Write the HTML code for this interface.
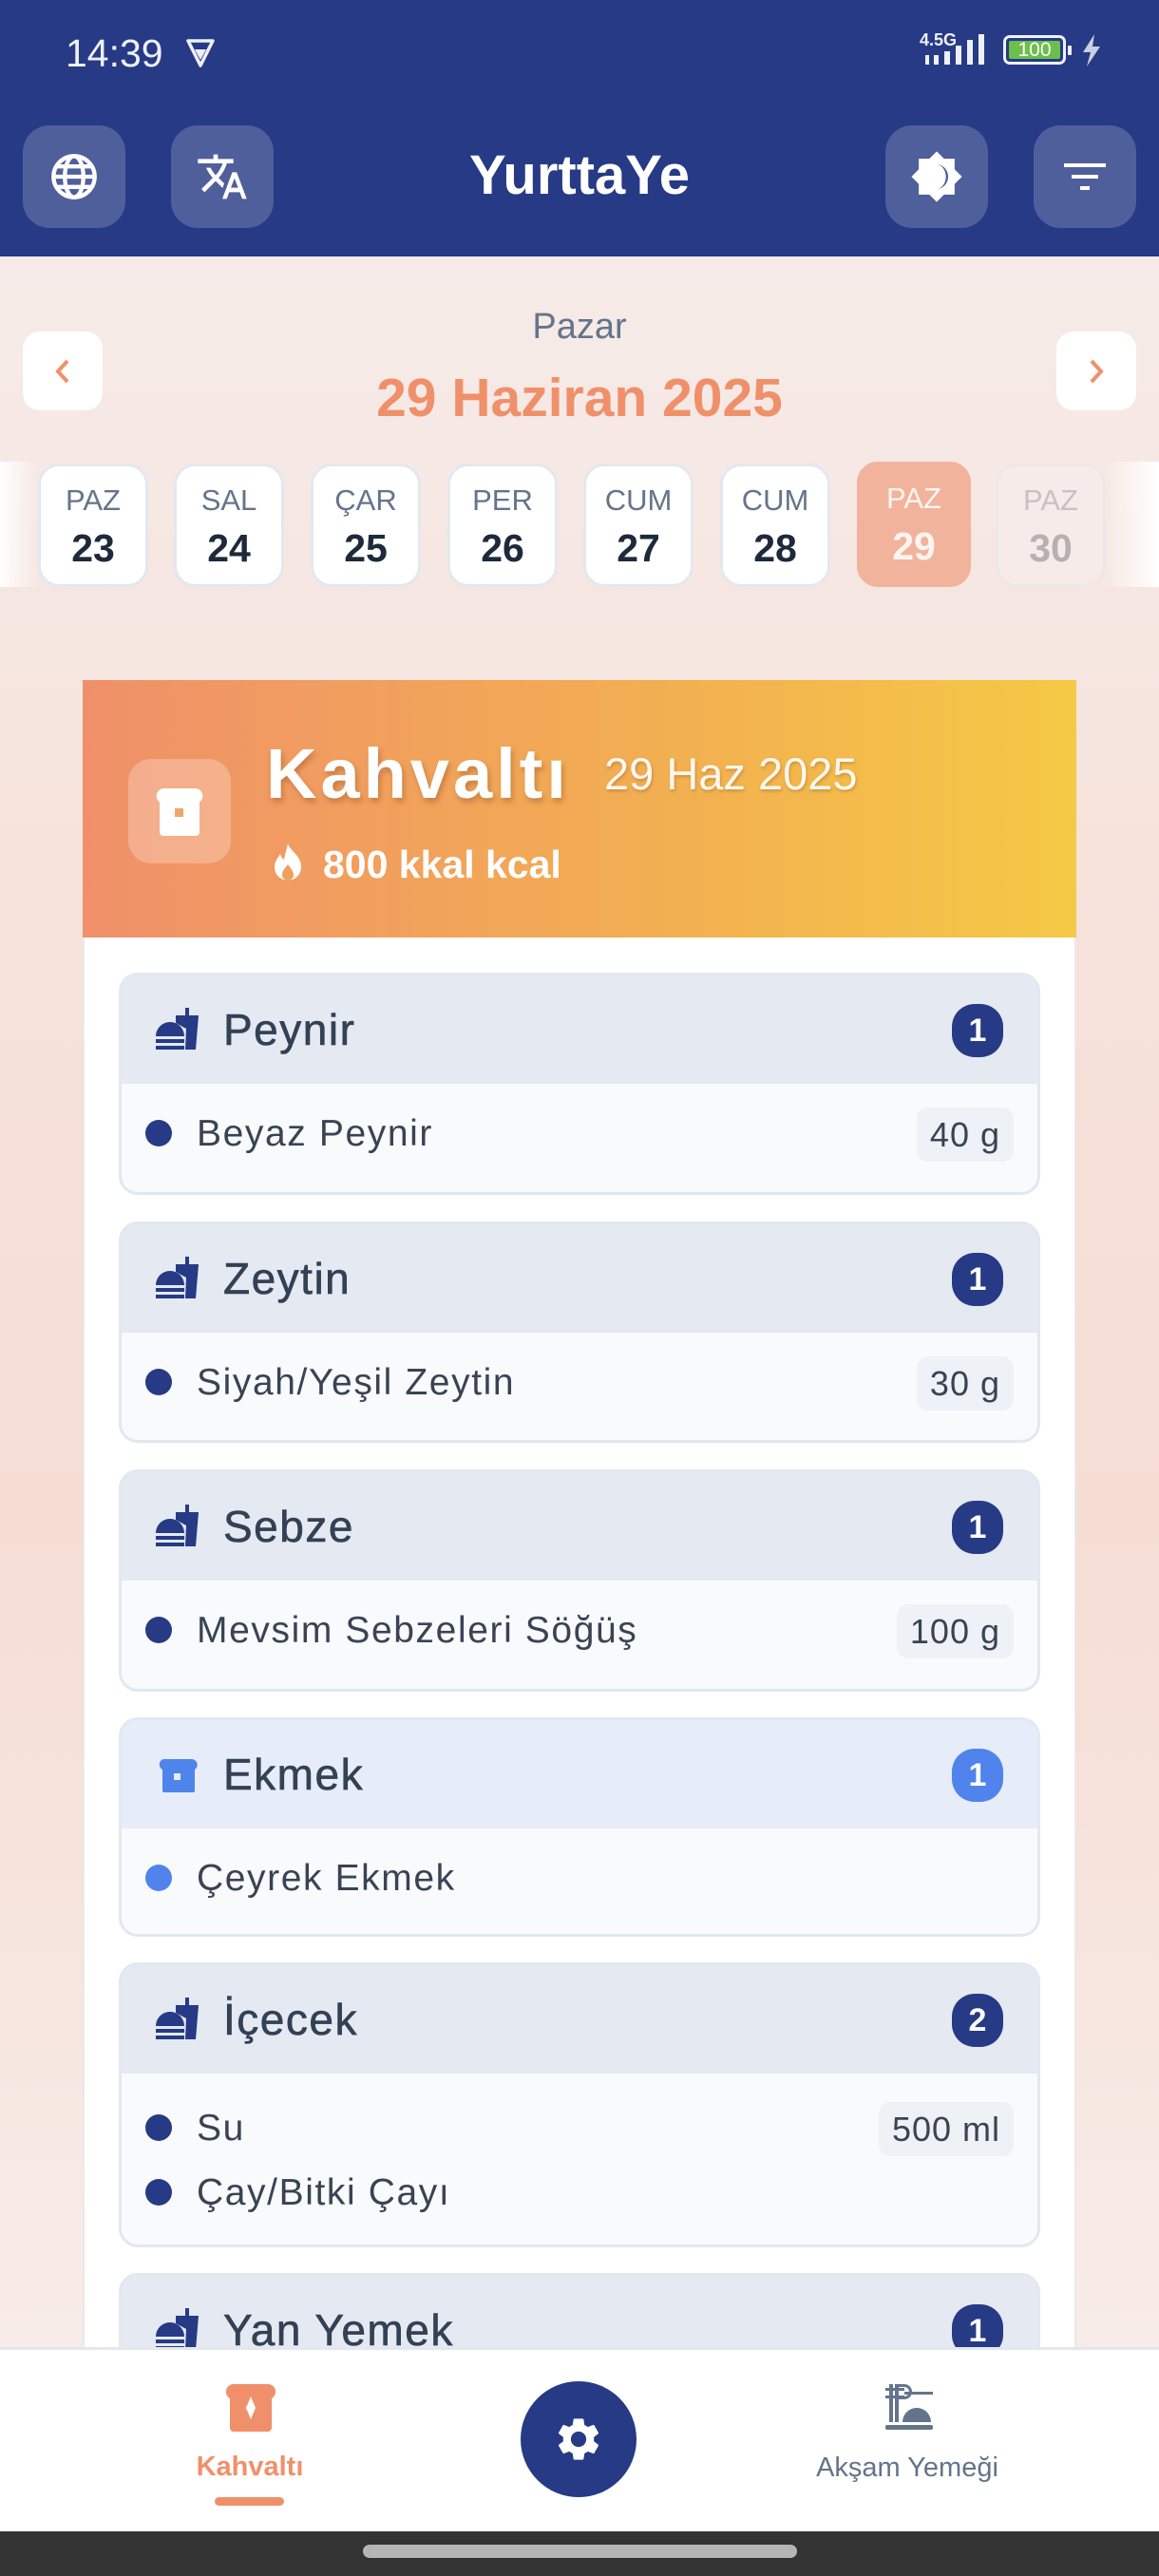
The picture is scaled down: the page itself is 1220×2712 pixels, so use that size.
<!DOCTYPE html>
<html><head><meta charset="utf-8"><style>
*{margin:0;padding:0;box-sizing:border-box}
body{width:1220px;height:2712px;overflow:hidden;position:relative;font-family:"Liberation Sans",sans-serif;background:linear-gradient(180deg,#f6ebe8 270px,#f6e3dc 900px,#f5ddd4 1600px,#f8ece8 2471px)}
.a{position:absolute}
.hb{position:absolute;top:132px;width:108px;height:108px;border-radius:28px;background:#4f5f9c;display:flex;align-items:center;justify-content:center}
.chip{position:absolute;top:488px;width:116px;height:130px;border-radius:22px;background:#fff;border:3px solid #e3e8f0;text-align:center}
.chip .l{position:absolute;top:19px;left:0;right:0;font-size:31px;color:#64748b;line-height:34px}
.chip .n{position:absolute;top:64px;left:0;right:0;font-size:41px;font-weight:bold;color:#1e293b;line-height:44px}
.cat{position:absolute;left:125px;width:970px;border:3px solid #e2e8f0;border-radius:20px;background:#f8fafc;overflow:hidden}
.ch{height:114px;background:#e4e9f2;position:relative}
.ch .t{position:absolute;left:107px;top:32px;font-size:46px;color:#334155;line-height:50px;letter-spacing:1.5px;-webkit-text-stroke:0.6px #334155}
.ch svg{position:absolute;left:36px;top:34px}
.bd{position:absolute;right:36px;top:30px;width:54px;height:56px;border-radius:24px;background:#263a85;color:#fff;font-size:34px;font-weight:bold;text-align:center;line-height:56px}
.it{position:relative;height:68px}
.it .d{position:absolute;left:25px;top:22px;width:28px;height:28px;border-radius:50%;background:#263a85}
.it .x{position:absolute;left:79px;top:16px;font-size:39px;color:#3a4354;line-height:42px;letter-spacing:1.6px}
.it .p{position:absolute;right:25px;top:9px;height:57px;padding:0 14px;border-radius:12px;background:#eef1f6;font-size:36px;color:#3a4354;line-height:57px;letter-spacing:1px}
</style></head><body>
<div class="a" style="left:0;top:0;width:1220px;height:270px;background:#263a85"></div>
<div class="a" style="left:69px;top:34px;font-size:41px;color:#eef0f8;line-height:44px">14:39</div>
<svg class="a" style="left:194px;top:40px" width="34" height="32" viewBox="0 0 34 32"><path d="M4 3h26l-13 26z" fill="none" stroke="#eef0f8" stroke-width="3.5" stroke-linejoin="round"/><path d="M11 12h12l-6 11z" fill="#eef0f8"/></svg>
<div class="a" style="left:968px;top:32px;font-size:18px;font-weight:bold;color:#eef0f8">4.5G</div>
<svg class="a" style="left:970px;top:36px" width="72" height="34" viewBox="0 0 72 34"><rect x="4" y="22" width="4" height="10" fill="#eef0f8"/><rect x="13" y="22" width="5" height="10" fill="#eef0f8"/><rect x="24" y="18" width="6" height="14" fill="#eef0f8"/><rect x="36" y="12" width="6" height="20" fill="#eef0f8"/><rect x="48" y="6" width="6" height="26" fill="#eef0f8"/><rect x="60" y="0" width="6" height="32" fill="#eef0f8"/></svg>
<div class="a" style="left:1056px;top:37px;width:66px;height:31px;border:3px solid #eef0f8;border-radius:7px;padding:3px"><div style="width:100%;height:100%;background:#6bbf4a;border-radius:2px;color:#fff;font-size:21px;line-height:19px;text-align:center">100</div></div>
<div class="a" style="left:1124px;top:48px;width:4px;height:10px;background:#eef0f8;border-radius:1px"></div>
<svg class="a" style="left:1138px;top:36px" width="22" height="34" viewBox="0 0 22 34"><path d="M14 0L2 19h8L6 34l14-21h-8z" fill="#c9cfe3"/></svg>

<div class="hb" style="left:24px"><svg width="52" height="52" viewBox="0 0 24 24" fill="none" stroke="#fff" stroke-width="2"><circle cx="12" cy="12" r="10"/><ellipse cx="12" cy="12" rx="4.5" ry="10"/><path d="M2 12h20M3.5 7h17M3.5 17h17"/></svg></div>
<div class="hb" style="left:180px"><svg width="56" height="56" viewBox="0 0 24 24" fill="#fff"><path d="M12.87 15.07l-2.54-2.51.03-.03A17.5 17.5 0 0014.07 6H17V4h-7V2H8v2H1v2h11.17C11.5 7.92 10.44 9.750 9 11.35 8.07 10.32 7.3 9.19 6.69 8h-2c.73 1.63 1.73 3.17 2.98 4.560l-5.09 5.02L4 19l5-5 3.11 3.11.76-2.04zM18.5 10h-2L12 22h2l1.12-3h4.75L21 22h2l-4.5-12zm-2.62 7l1.62-4.33L19.12 17h-3.24z"/></svg></div>
<div class="a" style="left:0;width:1220px;top:150px;text-align:center;font-size:58px;font-weight:bold;color:#fff;line-height:70px">YurttaYe</div>
<div class="hb" style="left:932px"><svg width="58" height="58" viewBox="0 0 24 24"><path d="M12 1l3.2 3.2H19.8v4.6L23 12l-3.2 3.2v4.6h-4.6L12 23l-3.2-3.2H4.2v-4.6L1 12l3.2-3.2V4.2h4.6z" fill="#fff"/><path d="M11.5 6.5a5.5 5.5 0 010 11a4.5 5.5 0 000-11z" fill="#4f5f9c"/></svg></div>
<div class="hb" style="left:1088px"><svg width="48" height="48" viewBox="0 0 48 48" fill="#fff"><rect x="2" y="10" width="44" height="4"/><rect x="10" y="22" width="28" height="4"/><rect x="19" y="34" width="10" height="4"/></svg></div>

<div class="a" style="left:24px;top:349px;width:84px;height:83px;background:#fff;border-radius:18px;display:flex;align-items:center;justify-content:center"><svg width="20" height="28" viewBox="0 0 20 28"><path d="M15 3L5 14l10 11" fill="none" stroke="#f0906a" stroke-width="4"/></svg></div>
<div class="a" style="left:1112px;top:349px;width:84px;height:83px;background:#fff;border-radius:18px;display:flex;align-items:center;justify-content:center"><svg width="20" height="28" viewBox="0 0 20 28"><path d="M5 3l10 11L5 25" fill="none" stroke="#f0906a" stroke-width="4"/></svg></div>
<div class="a" style="left:0;width:1220px;top:322px;text-align:center;font-size:38px;color:#64748b;line-height:44px">Pazar</div>
<div class="a" style="left:0;width:1220px;top:386px;text-align:center;font-size:57px;font-weight:bold;color:#f0906a;line-height:66px">29 Haziran 2025</div>

<div class="a" style="left:0;top:486px;width:40px;height:132px;background:linear-gradient(90deg,#fff,rgba(255,255,255,0))"></div>
<div class="a" style="left:1160px;top:486px;width:60px;height:132px;background:linear-gradient(270deg,#fff,rgba(255,255,255,0))"></div>
<div class="chip" style="left:40px"><div class="l">PAZ</div><div class="n">23</div></div>
<div class="chip" style="left:183px"><div class="l">SAL</div><div class="n">24</div></div>
<div class="chip" style="left:327px"><div class="l">ÇAR</div><div class="n">25</div></div>
<div class="chip" style="left:471px"><div class="l">PER</div><div class="n">26</div></div>
<div class="chip" style="left:614px"><div class="l">CUM</div><div class="n">27</div></div>
<div class="chip" style="left:758px"><div class="l">CUM</div><div class="n">28</div></div>
<div class="chip" style="left:902px;width:120px;height:132px;top:486px;background:#f2b39c;border-color:#f2b39c"><div class="l" style="color:#fff5f0">PAZ</div><div class="n" style="color:#fff5f0">29</div></div>
<div class="chip" style="left:1048px;background:#f7ebe9;border-color:#f1e6e6"><div class="l" style="color:#c8c0c3">PAZ</div><div class="n" style="color:#b8afb1">30</div></div>

<div class="a" style="left:87px;top:716px;width:1046px;height:1760px;background:#fff;border-left:2px solid #ebe8ea;border-right:2px solid #ebe8ea"></div>
<div class="a" style="left:87px;top:716px;width:1046px;height:271px;background:linear-gradient(90deg,#f0906a,#f2ad52 55%,#f5c945)"></div>
<div class="a" style="left:135px;top:799px;width:108px;height:110px;border-radius:24px;background:rgba(255,255,255,0.25)"></div>
<svg class="a" style="left:163px;top:830px" width="52" height="50" viewBox="0 0 52 50"><path d="M10 0h32a8 8 0 015 14.5V46a4 4 0 01-4 4H9a4 4 0 01-4-4V14.5A8 8 0 0110 0z" fill="#fff"/><rect x="21" y="21" width="9" height="9" fill="#f1a56a"/></svg>
<div class="a" style="left:280px;top:774px;font-size:74px;font-weight:bold;color:#fff;line-height:82px;letter-spacing:4px;text-shadow:2px 4px 6px rgba(120,60,20,.35)">Kahvaltı</div>
<div class="a" style="left:636px;top:787px;font-size:47px;color:#fff8ee;line-height:56px;text-shadow:1px 2px 3px rgba(120,60,20,.3)">29 Haz 2025</div>
<svg class="a" style="left:287px;top:888px" width="32" height="40" viewBox="0 0 32 40"><path d="M16 0c2 8 14 12 14 25a14 14 0 01-28 0c0-7 4-10 6-14 1 4 3 5 4 6 1-6 3-11 4-17z" fill="#fff"/><path d="M16 22c3 4 6 7 6 11a6 6 0 01-12 0c0-4 3-7 6-11z" fill="#f0a05e"/></svg>
<div class="a" style="left:340px;top:887px;font-size:41px;font-weight:bold;color:#fff;line-height:46px">800 kkal kcal</div>

<svg width="0" height="0" style="position:absolute"><defs><g id="ff"><path d="M0 30a15 15 0 0130 0z"/><rect x="0" y="33" width="30" height="4"/><rect x="0" y="40" width="30" height="4"/><path d="M21 8h24l-3 36h-11l1-22-11-6z"/><rect x="31" y="0" width="4" height="9"/></g></defs></svg>

<div class="cat" style="top:1024px;height:234px"><div class="ch"><svg width="46" height="46" viewBox="0 0 46 46" fill="#263a85"><use href="#ff"/></svg><div class="t">Peynir</div><div class="bd">1</div></div>
<div class="it" style="margin-top:16px"><div class="d"></div><div class="x">Beyaz Peynir</div><div class="p">40 g</div></div></div>

<div class="cat" style="top:1286px;height:233px"><div class="ch"><svg width="46" height="46" viewBox="0 0 46 46" fill="#263a85"><use href="#ff"/></svg><div class="t">Zeytin</div><div class="bd">1</div></div>
<div class="it" style="margin-top:16px"><div class="d"></div><div class="x">Siyah/Yeşil Zeytin</div><div class="p">30 g</div></div></div>

<div class="cat" style="top:1547px;height:234px"><div class="ch"><svg width="46" height="46" viewBox="0 0 46 46" fill="#263a85"><use href="#ff"/></svg><div class="t">Sebze</div><div class="bd">1</div></div>
<div class="it" style="margin-top:16px"><div class="d"></div><div class="x">Mevsim Sebzeleri Söğüş</div><div class="p">100 g</div></div></div>

<div class="cat" style="top:1808px;height:231px"><div class="ch" style="background:#e6ecf8"><svg width="46" height="46" viewBox="0 0 46 46" fill="#4f84ea"><path d="M8 7h30a6 6 0 013 11V40a2 2 0 01-2 2H9a2 2 0 01-2-2V18A6 6 0 018 7z"/><rect x="19" y="22" width="7" height="7" fill="#e6ecf8"/></svg><div class="t">Ekmek</div><div class="bd" style="background:#5084ec">1</div></div>
<div class="it" style="margin-top:16px"><div class="d" style="background:#5084ec"></div><div class="x">Çeyrek Ekmek</div></div></div>

<div class="cat" style="top:2066px;height:300px"><div class="ch"><svg width="46" height="46" viewBox="0 0 46 46" fill="#263a85"><use href="#ff"/></svg><div class="t">İçecek</div><div class="bd">2</div></div>
<div class="it" style="margin-top:21px"><div class="d"></div><div class="x">Su</div><div class="p">500 ml</div></div>
<div class="it"><div class="d"></div><div class="x">Çay/Bitki Çayı</div></div></div>

<div class="cat" style="top:2393px;height:200px"><div class="ch"><svg width="46" height="46" viewBox="0 0 46 46" fill="#263a85"><use href="#ff"/></svg><div class="t">Yan Yemek</div><div class="bd">1</div></div></div>

<div class="a" style="left:0;top:2471px;width:1220px;height:194px;background:#fff;border-top:3px solid #e3e8ee"></div>
<svg class="a" style="left:236px;top:2510px" width="56" height="50" viewBox="0 0 56 50"><path d="M10 0h36a8 8 0 014 15V46a4 4 0 01-4 4H10a4 4 0 01-4-4V15A8 8 0 0110 0z" fill="#f0906a"/><path d="M28 13l5 12-5 12-5-12z" fill="#fff"/></svg>
<div class="a" style="left:163px;width:200px;top:2580px;text-align:center;font-size:29px;font-weight:bold;color:#f0906a;line-height:34px">Kahvaltı</div>
<div class="a" style="left:226px;top:2629px;width:73px;height:9px;border-radius:5px;background:#f0906a"></div>
<div class="a" style="left:548px;top:2507px;width:122px;height:122px;border-radius:50%;background:#263a85;display:flex;align-items:center;justify-content:center"><svg width="54" height="54" viewBox="0 0 24 24"><path fill="#fff" d="M19.14 12.94c.04-.3.06-.61.06-.94s-.02-.64-.07-.94l2.030-1.58a.49.49 0 00.12-.61l-1.92-3.32a.49.49 0 00-.59-.22l-2.39.96c-.5-.38-1.03-.7-1.62-.94l-.36-2.54a.48.48 0 00-.48-.41h-3.84c-.24 0-.43.17-.47.41l-.36 2.54c-.59.24-1.13.57-1.62.94l-2.39-.96a.48.48 0 00-.59.22L2.74 8.87c-.12.21-.08.47.12.61l2.03 1.58c-.05.3-.09.63-.09.94s.02.64.07.94l-2.03 1.58a.49.49 0 00-.12.61l1.92 3.32c.12.22.37.29.59.22l2.39-.96c.5.38 1.03.7 1.62.94l.36 2.54c.05.24.24.41.48.41h3.84c.24 0 .44-.17.47-.41l.36-2.54c.59-.24 1.13-.56 1.62-.94l2.39.96c.22.08.47 0 .59-.22l1.92-3.32c.12-.22.07-.47-.12-.61l-2.01-1.58zM12 15.6A3.6 3.6 0 1112 8.4a3.6 3.6 0 010 7.2z"/></svg></div>
<svg class="a" style="left:932px;top:2510px" width="52" height="50" viewBox="0 0 52 50" fill="#64748b"><rect x="4" y="0" width="4" height="40"/><rect x="10" y="0" width="4" height="40"/><rect x="0" y="4" width="20" height="3"/><rect x="0" y="12" width="20" height="3"/><path d="M14 0h6a8 8 0 010 16h-6v-3h6a5 5 0 000-10h-6z"/><rect x="20" y="8" width="30" height="3"/><path d="M18 40a15 15 0 0130 0z"/><rect x="0" y="43" width="50" height="5" rx="2"/></svg>
<div class="a" style="left:805px;width:300px;top:2581px;text-align:center;font-size:29px;color:#64748b;line-height:34px">Akşam Yemeği</div>

<div class="a" style="left:0;top:2665px;width:1220px;height:47px;background:#333"></div>
<div class="a" style="left:382px;top:2679px;width:457px;height:14px;border-radius:7px;background:#b5b5b5"></div>
</body></html>
